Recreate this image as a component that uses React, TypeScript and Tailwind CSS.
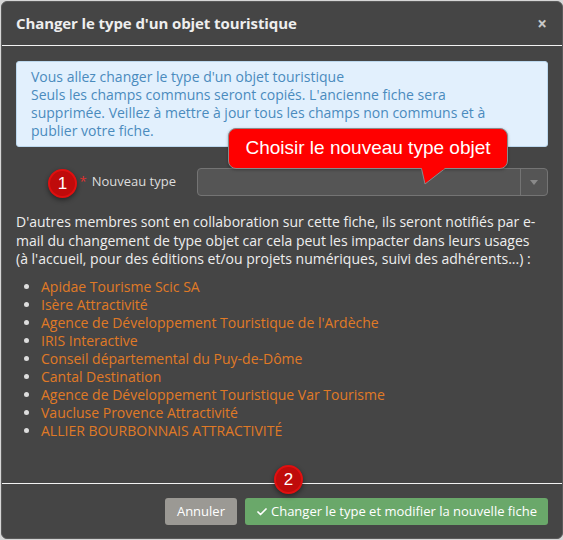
import { Check } from 'lucide-react'

const MEMBRES = [
  'Apidae Tourisme Scic SA',
  'Isère Attractivité',
  "Agence de Développement Touristique de l'Ardèche",
  'IRIS Interactive',
  'Conseil départemental du Puy-de-Dôme',
  'Cantal Destination',
  'Agence de Développement Touristique Var Tourisme',
  'Vaucluse Provence Attractivité',
  'ALLIER BOURBONNAIS ATTRACTIVITÉ',
]

// numbered step marker, sits over the dialog
function Step({ n, className }: { n: number; className: string }) {
  return (
    <span
      className={`absolute flex h-[29px] w-[29px] items-center justify-center rounded-full border-2 border-[#e01010] bg-[#bf0b0b] font-['Liberation_Sans',sans-serif] text-[17px] text-white shadow-[0_2px_5px_rgba(0,0,0,0.45)] ${className}`}
    >
      {n}
    </span>
  )
}

export default function App() {
  return (
    <div className="h-[540px] w-[563px] bg-[#d6d6d6] pl-px pt-px font-['Open_Sans',sans-serif]">
      <div className="relative flex h-[538px] w-[562px] flex-col rounded-[6px] border border-[#5a5a5a] bg-[#454545]">
        <div className="flex h-[44px] items-center justify-between border-b border-[#f2f2f2] pl-[14px] pr-[15px]">
          <h4 className="text-[15px] font-bold tracking-[-0.1px] text-[#eeeeee]">Changer le type d'un objet touristique</h4>
          <span className="text-[17px] font-bold leading-none text-[#c8c8c8]">×</span>
        </div>

        <div className="flex-1 px-[14px] pt-[15px]">
          <div className="rounded-[3px] border border-[#bcd8ee] bg-[#e2f0fd] py-[6px] pl-[14px] pr-[34px] text-[14px] leading-[18px] text-[#4a8bbd]">
            Vous allez changer le type d'un objet touristique
            <br />
            Seuls les champs communs seront copiés. L'ancienne fiche sera supprimée. Veillez à mettre à jour tous les
            champs non communs et à publier votre fiche.
          </div>

          <div className="mt-[21px] flex h-[28px] items-center">
            <label className="flex w-[181px] items-center justify-end gap-[5px] pr-[21px] text-[13px] text-[#dddddd]">
              <span className="text-[#e0312f]">*</span>
              Nouveau type
            </label>
            <div className="flex h-[28px] flex-1 rounded-[4px] border border-[#747474] bg-[#555555]">
              <div className="flex-1" />
              <div className="flex w-[27px] items-center justify-center border-l border-[#747474]">
                <svg width="8" height="5" viewBox="0 0 8 5">
                  <path d="M0 0h8L4 5z" fill="#8a8a8a" />
                </svg>
              </div>
            </div>
          </div>

          <p className="mt-[17px] text-[14px] leading-[18.5px] text-[#eeeeee]">
            D'autres membres sont en collaboration sur cette fiche, ils seront notifiés par e-mail du changement de type
            objet car cela peut les impacter dans leurs usages (à&nbsp;l'accueil, pour des éditions et/ou projets
            numériques, suivi des adhérents...) :
          </p>

          <ul className="mt-[9px] list-disc pl-[25px] text-[14px] leading-[18px] text-[#dddddd]">
            {MEMBRES.map((m) => (
              <li key={m}>
                <a className="text-[#e07a25]">{m}</a>
              </li>
            ))}
          </ul>
        </div>

        <div className="flex justify-end gap-[8px] border-t border-[#f2f2f2] px-[14px] pb-[13px] pt-[14px]">
          <button className="h-[27px] rounded-[3px] bg-[#9b9994] px-[12px] text-[13px] text-white">Annuler</button>
          <button className="flex h-[27px] items-center gap-[3px] rounded-[3px] bg-[#6aa86a] px-[11px] text-[13px] text-white">
            <Check size={12} strokeWidth={3.5} />
            Changer le type et modifier la nouvelle fiche
          </button>
        </div>

        {/* red callout pointing at the select */}
        <div className="absolute left-[226px] top-[126px] flex h-[41px] w-[280px] items-center justify-center rounded-[8px] border border-[#8a8a8a] bg-[#ff0000] font-['Liberation_Sans',sans-serif] text-[19px] text-white shadow-[0_1px_3px_rgba(0,0,0,0.3)]">
          Choisir le nouveau type objet
          <svg className="absolute left-[192px] top-[39px]" width="25" height="17" viewBox="0 0 25 17">
            <path d="M0.5 0 L4 16 L24 0 Z" fill="#ff0000" />
            <path d="M0.5 0.5 L4 16 L24 0.5" fill="none" stroke="#8a8a8a" strokeWidth="1" />
            <rect x="1.3" y="0" width="22" height="1.5" fill="#ff0000" />
          </svg>
        </div>

        <Step n={1} className="left-[46px] top-[167px]" />
        <Step n={2} className="left-[272px] top-[463px]" />
      </div>
    </div>
  )
}
